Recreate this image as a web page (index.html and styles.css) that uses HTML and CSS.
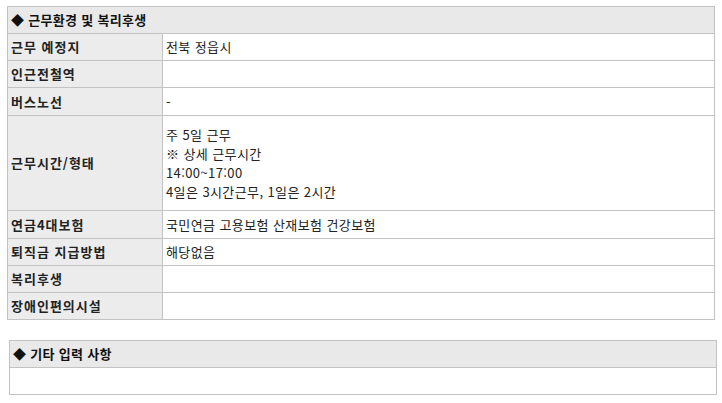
FILE: index.html
```html
<!DOCTYPE html>
<html lang="ko">
<head>
<meta charset="utf-8">
<link rel="stylesheet" href="styles.css">
</head>
<body>
<table class="info">
  <colgroup><col class="c-lbl"><col class="c-val"></colgroup>
  <tr><th class="sect" colspan="2">◆ 근무환경 및 복리후생</th></tr>
  <tr><td class="lbl">근무 예정지</td><td class="val">전북 정읍시</td></tr>
  <tr><td class="lbl">인근전철역</td><td class="val"></td></tr>
  <tr class="r28"><td class="lbl">버스노선</td><td class="val">-</td></tr>
  <tr><td class="lbl">근무시간/형태</td><td class="val multi">주 5일 근무<br>※ 상세 근무시간<br>14:00~17:00<br>4일은 3시간근무, 1일은 2시간</td></tr>
  <tr class="r28"><td class="lbl">연금4대보험</td><td class="val">국민연금 고용보험 산재보험 건강보험</td></tr>
  <tr><td class="lbl">퇴직금 지급방법</td><td class="val">해당없음</td></tr>
  <tr><td class="lbl">복리후생</td><td class="val"></td></tr>
  <tr><td class="lbl">장애인편의시설</td><td class="val"></td></tr>
</table>
<table class="info etc">
  <tr><th class="sect">◆ 기타 입력 사항</th></tr>
  <tr><td class="val"></td></tr>
</table>
</body>
</html>
```
FILE: styles.css
```css
html, body {
  margin: 0;
  padding: 0;
  background: #ffffff;
}
body {
  padding: 6px 0 0 7px;
  font-family: "Noto Sans CJK KR", "Noto Sans", sans-serif;
  color: #222;
}
.info {
  border-collapse: collapse;
  width: 708px;
  table-layout: fixed;
}
.c-lbl { width: 155px; }
.info th, .info td {
  border: 1px solid #c3c3c3;
  height: 26px;
  padding: 0 3px;
  text-align: left;
  vertical-align: middle;
  line-height: 18px;
}
.info .r28 td { height: 27px; }
.info .sect {
  background: #e9e9e9;
  font-size: 13px;
  letter-spacing: 0.3px;
  font-weight: bold;
  color: #111;
}
.info .lbl {
  background: #ececec;
  font-size: 13px;
  letter-spacing: 1px;
  font-weight: bold;
  color: #222;
}
.info .val {
  background: #fff;
  font-size: 13px;
  letter-spacing: 0.4px;
  color: #222;
}
.info .multi {
  line-height: 19px;
  padding-top: 9px;
  padding-bottom: 9px;
}
.etc {
  margin-top: 20px;
  margin-left: 2px;
}
```
